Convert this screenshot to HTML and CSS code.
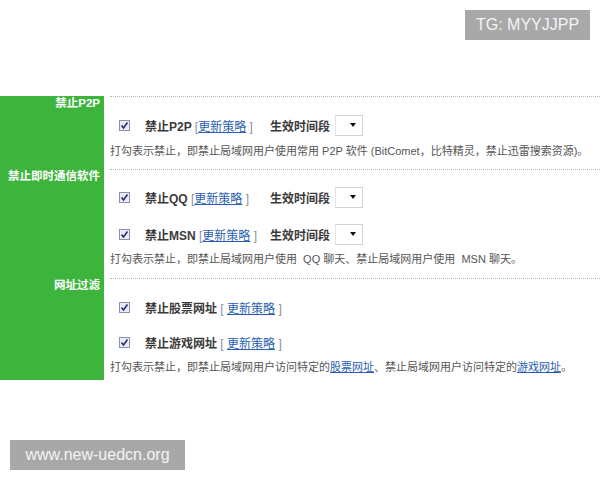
FILE: index.html
```html
<!DOCTYPE html>
<html lang="zh-CN">
<head>
<meta charset="utf-8">
<link rel="stylesheet" href="styles.css">
</head>
<body>
<div class="page">
  <div class="policy">
    <div class="label">禁止P2P</div>
    <div class="content sec1">
      <div class="row">
        <span class="cb"><svg width="11" height="11" viewBox="0 0 11 11"><rect x="0.5" y="0.5" width="10" height="10" fill="#e9ecf6" stroke="#8c91a6"/><path d="M2.5 5.5 L4.5 8 L8.5 2.5" fill="none" stroke="#1e2a6e" stroke-width="1.5"/></svg></span>
        <span class="name">禁止P2P <span class="br">[</span><a class="lk">更新策略</a> <span class="br">]</span></span>
        <span class="time">生效时间段</span>
        <span class="sel"><i class="arrow"></i></span>
      </div>
      <div class="desc">打勾表示禁止，即禁止局域网用户使用常用 P2P 软件 (BitComet，比特精灵，禁止迅雷搜索资源)。</div>
    </div>

    <div class="label">禁止即时通信软件</div>
    <div class="content sec2">
      <div class="row">
        <span class="cb"><svg width="11" height="11" viewBox="0 0 11 11"><rect x="0.5" y="0.5" width="10" height="10" fill="#e9ecf6" stroke="#8c91a6"/><path d="M2.5 5.5 L4.5 8 L8.5 2.5" fill="none" stroke="#1e2a6e" stroke-width="1.5"/></svg></span>
        <span class="name">禁止QQ <span class="br">[</span><a class="lk">更新策略</a> <span class="br">]</span></span>
        <span class="time">生效时间段</span>
        <span class="sel"><i class="arrow"></i></span>
      </div>
      <div class="row">
        <span class="cb"><svg width="11" height="11" viewBox="0 0 11 11"><rect x="0.5" y="0.5" width="10" height="10" fill="#e9ecf6" stroke="#8c91a6"/><path d="M2.5 5.5 L4.5 8 L8.5 2.5" fill="none" stroke="#1e2a6e" stroke-width="1.5"/></svg></span>
        <span class="name">禁止MSN <span class="br">[</span><a class="lk">更新策略</a> <span class="br">]</span></span>
        <span class="time">生效时间段</span>
        <span class="sel"><i class="arrow"></i></span>
      </div>
      <div class="desc">打勾表示禁止，即禁止局域网用户使用 &nbsp;QQ 聊天、禁止局域网用户使用 &nbsp;MSN 聊天。</div>
    </div>

    <div class="label">网址过滤</div>
    <div class="content sec3">
      <div class="row">
        <span class="cb"><svg width="11" height="11" viewBox="0 0 11 11"><rect x="0.5" y="0.5" width="10" height="10" fill="#e9ecf6" stroke="#8c91a6"/><path d="M2.5 5.5 L4.5 8 L8.5 2.5" fill="none" stroke="#1e2a6e" stroke-width="1.5"/></svg></span>
        <span class="name wide">禁止股票网址 <span class="br">[</span> <a class="lk">更新策略</a> <span class="br">]</span></span>
      </div>
      <div class="row">
        <span class="cb"><svg width="11" height="11" viewBox="0 0 11 11"><rect x="0.5" y="0.5" width="10" height="10" fill="#e9ecf6" stroke="#8c91a6"/><path d="M2.5 5.5 L4.5 8 L8.5 2.5" fill="none" stroke="#1e2a6e" stroke-width="1.5"/></svg></span>
        <span class="name wide">禁止游戏网址 <span class="br">[</span> <a class="lk">更新策略</a> <span class="br">]</span></span>
      </div>
      <div class="desc">打勾表示禁止，即禁止局域网用户访问特定的<a class="lk">股票网址</a>、禁止局域网用户访问特定的<a class="lk">游戏网址</a>。</div>
    </div>
  </div>
</div>
<div class="wm wm-top">TG: MYYJJPP</div>
<div class="wm wm-bottom">www.new-uedcn.org</div>
</body>
</html>
```

FILE: styles.css
```css
html, body {
  margin: 0;
  padding: 0;
  background: #fff;
}
body {
  width: 600px;
  height: 480px;
  position: relative;
  overflow: hidden;
  font-family: "Liberation Sans", "Noto Sans CJK SC", sans-serif;
  font-size: 12px;
  color: #444;
}
.page {
  padding-top: 96px;
}
.policy {
  display: grid;
  grid-template-columns: 104px 1fr;
}
.label {
  background: #3db53d;
  color: #fff;
  font-weight: bold;
  text-align: right;
  padding: 1px 4px 0 0;
  line-height: 12px;
  font-size: 11.5px;
  white-space: nowrap;
}
.content {
  margin-left: 6px;
  border-top: 1px dotted #b8b8b8;
  display: flex;
  flex-direction: column;
}
.sec1 { padding: 17px 0 8px; gap: 5px; }
.sec2 { padding: 16px 0 9px; gap: 15px; }
.sec2 .desc { margin-top: -11px; }
.sec3 { padding: 17px 0 3px; gap: 13px; }
.sec3 .desc { margin-top: -9px; }
.row {
  display: flex;
  align-items: center;
  height: 22px;
  padding-left: 9px;
}
.cb {
  width: 11px;
  height: 11px;
  display: flex;
  margin-right: 15px;
}
.name {
  width: 125px;
  font-weight: bold;
  color: #3a3a3a;
  white-space: nowrap;
}
.name.wide { width: auto; }
.br {
  color: #8a8f99;
  font-weight: normal;
}
.lk {
  color: #2a5fb0;
  text-decoration: underline;
  font-weight: normal;
}
.time {
  font-weight: bold;
  color: #3a3a3a;
  margin-right: 5px;
}
.sel {
  height: 19px;
  width: 20px;
  border: 1px solid #d4d4d4;
  border-left-color: #e2e2e2;
  display: flex;
  align-items: center;
  justify-content: flex-end;
  padding-right: 6px;
}
.arrow {
  width: 0;
  height: 0;
  border-left: 3.5px solid transparent;
  border-right: 3.5px solid transparent;
  border-top: 4px solid #111;
}
.desc {
  font-size: 11px;
  line-height: 20px;
  height: 20px;
  color: #555;
  white-space: nowrap;
}
.wm {
  position: absolute;
  background: #a8a8a8;
  color: #f4f4f4;
  font-family: "Liberation Sans", Arial, sans-serif;
  font-size: 16px;
  height: 30px;
  line-height: 30px;
  text-align: center;
}
.wm-top {
  left: 465px;
  top: 10px;
  width: 125px;
}
.wm-bottom {
  left: 10px;
  top: 440px;
  width: 175px;
}
```
